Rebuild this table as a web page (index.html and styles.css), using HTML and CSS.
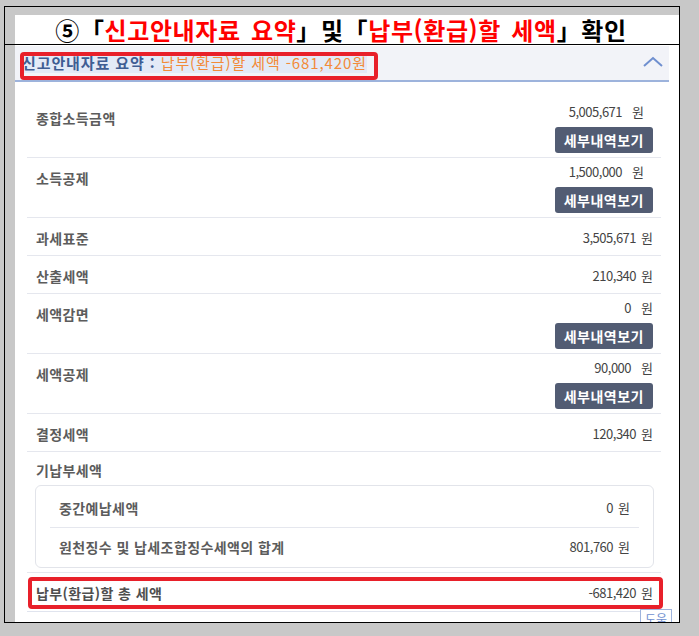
FILE: index.html
```html
<!DOCTYPE html>
<html lang="ko">
<head>
<meta charset="utf-8">
<title>신고안내자료 요약</title>
<link rel="stylesheet" href="styles.css">
</head>
<body>
<div class="frame">
  <div class="frame-top">
    <h1 class="title">⑤「<span class="red">신고안내자료 요약</span>」및「<span class="red">납부(환급)할 세액</span>」확인</h1>
  </div>
  <div class="frame-body">
    <div class="panel">
      <div class="summary-head">
        <span class="head-text"><b class="head-label">신고안내자료 요약 :</b> <span class="head-amount">납부(환급)할 세액 -681,420원</span></span>
        <svg class="chevron" width="22" height="12" viewBox="0 0 22 12"><path d="M2 10 L11 2 L20 10" fill="none" stroke="#6f8fcf" stroke-width="2"/></svg>
        <span class="mark mark-head"></span>
      </div>
      <div class="list">
        <div class="row detail first">
          <span class="label">종합소득금액</span>
          <div class="right"><span class="value">5,005,671<span class="unit">원</span></span><button class="btn">세부내역보기</button></div>
        </div>
        <div class="row detail first">
          <span class="label">소득공제</span>
          <div class="right"><span class="value">1,500,000<span class="unit">원</span></span><button class="btn">세부내역보기</button></div>
        </div>
        <div class="row single">
          <span class="label">과세표준</span>
          <span class="value">3,505,671<span class="unit">원</span></span>
        </div>
        <div class="row single">
          <span class="label">산출세액</span>
          <span class="value">210,340<span class="unit">원</span></span>
        </div>
        <div class="row detail">
          <span class="label">세액감면</span>
          <div class="right"><span class="value">0<span class="unit">원</span></span><button class="btn">세부내역보기</button></div>
        </div>
        <div class="row detail">
          <span class="label">세액공제</span>
          <div class="right"><span class="value">90,000<span class="unit">원</span></span><button class="btn">세부내역보기</button></div>
        </div>
        <div class="row single">
          <span class="label">결정세액</span>
          <span class="value">120,340<span class="unit">원</span></span>
        </div>
        <div class="row group">
          <span class="label">기납부세액</span>
          <div class="subbox">
            <div class="subrow">
              <span class="label sub">중간예납세액</span>
              <span class="value">0<span class="unit">원</span></span>
            </div>
            <div class="subrow">
              <span class="label sub">원천징수 및 납세조합징수세액의 합계</span>
              <span class="value">801,760<span class="unit">원</span></span>
            </div>
          </div>
        </div>
        <div class="row single total">
          <span class="label total-label">납부(환급)할 총 세액</span>
          <span class="value">-681,420<span class="unit">원</span></span>
          <span class="mark mark-total"></span>
        </div>
      </div>
      <div class="help">도움</div>
    </div>
  </div>
</div>
</body>
</html>
```

FILE: styles.css
```css
* { box-sizing: border-box; }
html, body { margin: 0; padding: 0; }
body {
  background: #c8c8c8;
  font-family: "Noto Sans CJK KR", "Noto Sans", sans-serif;
  width: 699px;
  height: 636px;
  overflow: hidden;
}
.frame {
  margin: 6px 0 0 4px;
  width: 676px;
  height: 617px;
  border: 1px solid #000;
  display: flex;
  flex-direction: column;
  overflow: hidden;
}
.frame-top {
  padding: 8px 0 0 10px;
  border-bottom: 1px solid #000;
}
.title {
  margin: 0;
  background: #fff;
  height: 29px;
  display: flex;
  align-items: center;
  justify-content: center;
  font-size: 24px;
  font-weight: 700;
  color: #000;
  letter-spacing: 0.6px;
  word-spacing: 3px;
  white-space: pre;
  padding-right: 12px;
}
.red { color: #ff0000; }
.frame-body {
  flex: 1;
  display: flex;
  padding-left: 10px;
  min-height: 0;
}
.panel {
  flex: 1;
  background: #fff;
  position: relative;
  overflow: hidden;
}
.summary-head {
  position: relative;
  margin: 1px 10px 0 0;
  height: 36px;
  background: #f2f3f8;
  border-bottom: 2px solid #9db3dc;
  display: flex;
  align-items: center;
  justify-content: space-between;
  padding: 0 5px 0 7px;
}
.head-text {
  font-size: 15px;
  background: #e3eaf7;
  line-height: 20px;
  white-space: pre;
  letter-spacing: 0.9px;
}
.head-label { color: #3f5d93; font-weight: 700; }
.head-amount { color: #f28b3a; }
.chevron { display: block; margin-bottom: 2px; }
.mark {
  position: absolute;
  border: 4px solid #e8202a;
  border-radius: 4px;
}
.mark-head { left: 5px; top: 6px; width: 358px; height: 28px; }
.list {
  margin: 0 18px 0 12px;
  padding-top: 16px;
}
.row {
  display: flex;
  justify-content: space-between;
  align-items: flex-start;
  border-bottom: 1px solid #e5e7ee;
  position: relative;
}
.label {
  font-size: 14px;
  font-weight: 700;
  color: #5c5c5c;
  line-height: 20px;
  letter-spacing: 0.4px;
}
.value {
  font-size: 13px;
  color: #444;
  line-height: 20px;
  letter-spacing: -0.5px;
  white-space: nowrap;
}
.unit { margin-left: 5px; letter-spacing: 0; }
.single { padding: 10px 8px 7px 9px; }
.detail { padding: 4px 8px 4px 9px; }
.detail .label { padding-top: 6px; }
.right {
  display: flex;
  flex-direction: column;
  align-items: flex-end;
}
.detail .unit { margin-left: 10px; }
.first .value { padding-right: 9px; }
.btn {
  margin-top: 5px;
  height: 26px;
  padding: 0 9px;
  border: 0;
  border-radius: 3px;
  background: #525c73;
  color: #fff;
  font-family: inherit;
  font-size: 14px;
  font-weight: 700;
  letter-spacing: 0.5px;
  line-height: 26px;
}
.group {
  flex-direction: column;
  align-items: stretch;
  padding: 8px 7px 4px 8px;
}
.group > .label { padding-left: 1px; }
.subbox {
  margin-top: 5px;
  border: 1px solid #e2e4ea;
  border-radius: 6px;
  padding: 3px 14px 1px;
}
.subrow {
  display: flex;
  justify-content: space-between;
  padding: 9px;
  line-height: 20px;
}
.subrow + .subrow { border-top: 1px solid #e5e7ee; }
.label.sub { font-size: 14px; }
.total { padding: 10px 8px 8px 9px; border-bottom-color: #e0e4ee; }
.total-label { color: #4f4f4f; }
.mark-total { left: 1px; top: 4px; right: -2px; height: 32px; }
.help {
  position: absolute;
  left: 625px;
  top: 564px;
  border: 1px solid #9fb4dd;
  background: #fff;
  color: #6f8fcf;
  font-size: 12px;
  line-height: 16px;
  padding: 1px 4px;
}
```
